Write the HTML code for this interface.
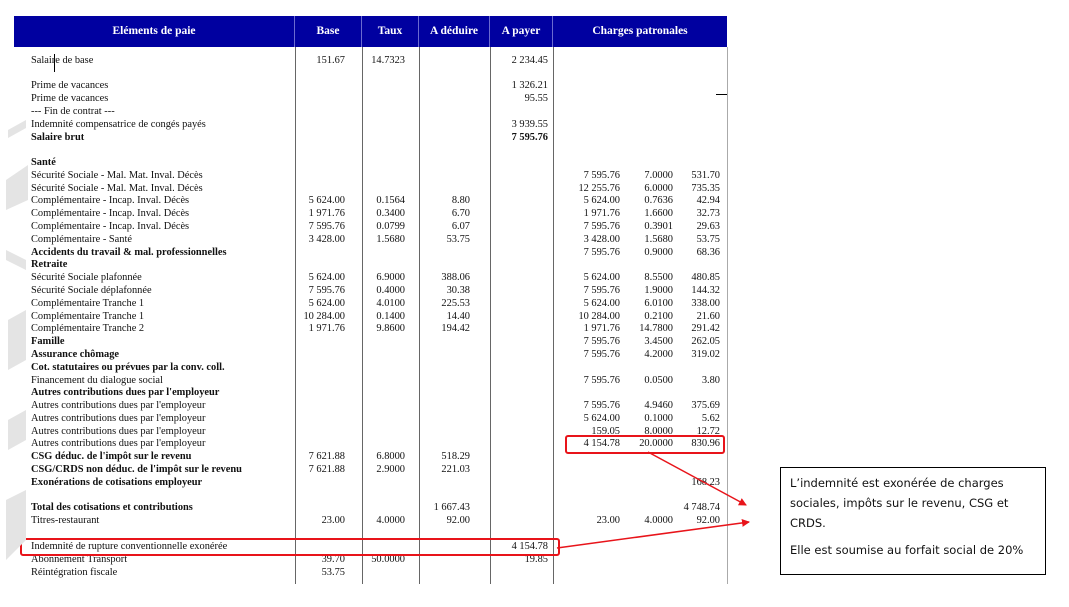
<!DOCTYPE html>
<html><head><meta charset="utf-8"><style>
body{margin:0;width:1069px;height:607px;background:#fff;position:relative;overflow:hidden;font-family:"Liberation Serif",serif;font-size:10.4px;color:#111}
.hd{position:absolute;top:16px;height:31px;background:#0000a0;color:#fff;font-weight:bold;font-size:11.5px;line-height:31px;text-align:center;border-right:1px solid #6a6ad0}
.vl{position:absolute;top:47px;height:537px;width:1px;background:#666}
.r{position:absolute;left:0;width:740px;height:13px;line-height:13px;white-space:nowrap}
.r span{position:absolute}
.l{left:31px}
.b{font-weight:bold}
.box{position:absolute;border:2px solid #e8141a;border-radius:3px}
</style></head><body>
<div class="hd" style="left:14px;width:280px">Eléments de paie</div>
<div class="hd" style="left:295px;width:66px">Base</div>
<div class="hd" style="left:362px;width:56px">Taux</div>
<div class="hd" style="left:419px;width:70px">A déduire</div>
<div class="hd" style="left:490px;width:62px">A payer</div>
<div class="hd" style="left:553px;width:174px;border:none">Charges patronales</div>
<div class="vl" style="left:295px"></div><div class="vl" style="left:362px"></div><div class="vl" style="left:419px"></div><div class="vl" style="left:490px"></div><div class="vl" style="left:553px"></div><div class="vl" style="left:727px;background:#aaa"></div>
<div style="position:absolute;left:54px;top:54px;width:1px;height:18px;background:#000"></div>
<div style="position:absolute;left:716px;top:94px;width:11px;height:1px;background:#000"></div>
<div id="rows"></div>
<div class="box" style="left:565px;top:435px;width:156px;height:15px"></div>
<div class="box" style="left:20px;top:538px;width:536px;height:14px"></div>
<svg style="position:absolute;left:0;top:0" width="1069" height="607">
<defs><marker id="a" markerWidth="8" markerHeight="8" refX="7" refY="4" orient="auto" markerUnits="userSpaceOnUse"><path d="M0,0 L8,4 L0,8z" fill="#e8141a"/></marker></defs>
<line x1="648" y1="452" x2="746" y2="505" stroke="#e8141a" stroke-width="1.5" marker-end="url(#a)"/>
<line x1="557" y1="548" x2="749" y2="522" stroke="#e8141a" stroke-width="1.5" marker-end="url(#a)"/>
</svg>
<div style="position:absolute;left:780px;top:467px;width:266px;height:108px;border:1px solid #000;font-family:'DejaVu Sans','Liberation Sans',sans-serif;font-size:11.5px;line-height:20px;padding:0 0 0 9px;box-sizing:border-box">
<div style="margin-top:5px">L’indemnité est exonérée de charges sociales, impôts sur le revenu, CSG et CRDS.</div>
<div style="margin-top:7px">Elle est soumise au forfait social de 20%</div></div>
<script>
const R=[345,405,470,548,620,673,720];
const rows=[
[54,"Salaire de base",0,"151.67","14.7323","","2 234.45"],
[79,"Prime de vacances",0,"","","","1 326.21"],
[92,"Prime de vacances",0,"","","","95.55"],
[105,"--- Fin de contrat ---",0],
[118,"Indemnité compensatrice de congés payés",0,"","","","3 939.55"],
[131,"Salaire brut",1,"","","","7 595.76"],
[156,"Santé",1],
[169,"Sécurité Sociale - Mal. Mat. Inval. Décès",0,"","","","","7 595.76","7.0000","531.70"],
[182,"Sécurité Sociale - Mal. Mat. Inval. Décès",0,"","","","","12 255.76","6.0000","735.35"],
[194,"Complémentaire - Incap. Inval. Décès",0,"5 624.00","0.1564","8.80","","5 624.00","0.7636","42.94"],
[207,"Complémentaire - Incap. Inval. Décès",0,"1 971.76","0.3400","6.70","","1 971.76","1.6600","32.73"],
[220,"Complémentaire - Incap. Inval. Décès",0,"7 595.76","0.0799","6.07","","7 595.76","0.3901","29.63"],
[233,"Complémentaire - Santé",0,"3 428.00","1.5680","53.75","","3 428.00","1.5680","53.75"],
[246,"Accidents du travail & mal. professionnelles",1,"","","","","7 595.76","0.9000","68.36"],
[258,"Retraite",1],
[271,"Sécurité Sociale plafonnée",0,"5 624.00","6.9000","388.06","","5 624.00","8.5500","480.85"],
[284,"Sécurité Sociale déplafonnée",0,"7 595.76","0.4000","30.38","","7 595.76","1.9000","144.32"],
[297,"Complémentaire Tranche 1",0,"5 624.00","4.0100","225.53","","5 624.00","6.0100","338.00"],
[310,"Complémentaire Tranche 1",0,"10 284.00","0.1400","14.40","","10 284.00","0.2100","21.60"],
[322,"Complémentaire Tranche 2",0,"1 971.76","9.8600","194.42","","1 971.76","14.7800","291.42"],
[335,"Famille",1,"","","","","7 595.76","3.4500","262.05"],
[348,"Assurance chômage",1,"","","","","7 595.76","4.2000","319.02"],
[361,"Cot. statutaires ou prévues par la conv. coll.",1],
[374,"Financement du dialogue social",0,"","","","","7 595.76","0.0500","3.80"],
[386,"Autres contributions dues par l'employeur",1],
[399,"Autres contributions dues par l'employeur",0,"","","","","7 595.76","4.9460","375.69"],
[412,"Autres contributions dues par l'employeur",0,"","","","","5 624.00","0.1000","5.62"],
[425,"Autres contributions dues par l'employeur",0,"","","","","159.05","8.0000","12.72"],
[437,"Autres contributions dues par l'employeur",0,"","","","","4 154.78","20.0000","830.96"],
[450,"CSG déduc. de l'impôt sur le revenu",1,"7 621.88","6.8000","518.29"],
[463,"CSG/CRDS non déduc. de l'impôt sur le revenu",1,"7 621.88","2.9000","221.03"],
[476,"Exonérations de cotisations employeur",1,"","","","","","","168.23"],
[501,"Total des cotisations et contributions",1,"","","1 667.43","","","","4 748.74"],
[514,"Titres-restaurant",0,"23.00","4.0000","92.00","","23.00","4.0000","92.00"],
[540,"Indemnité de rupture conventionnelle exonérée",0,"","","","4 154.78"],
[553,"Abonnement Transport",0,"39.70","50.0000","","19.85"],
[566,"Réintégration fiscale",0,"53.75"]];
let h="";
for(const r of rows){h+=`<div class="r${r[2]?' b':''}" style="top:${r[0]}px"><span class="l">${r[1]}</span>`;
for(let i=3;i<r.length;i++)if(r[i])h+=`<span style="right:${740-R[i-3]}px;font-weight:${i==6&&r[2]?'bold':'normal'}">${r[i]}</span>`;h+="</div>";}
document.getElementById("rows").innerHTML=h;
</script>
<svg style="position:absolute;left:0;top:120px" width="30" height="470"><g fill="#e4e4e4"><path d="M8,10 L26,0 L26,8 L8,18z"/><path d="M6,60 L28,45 L28,80 L6,90z"/><path d="M6,130 L26,140 L26,150 L6,140z"/><path d="M8,200 L26,190 L26,240 L8,250z"/><path d="M8,300 L26,290 L26,320 L8,330z"/><path d="M6,380 L26,370 L26,420 L6,440z"/></g></svg>
</body></html>
